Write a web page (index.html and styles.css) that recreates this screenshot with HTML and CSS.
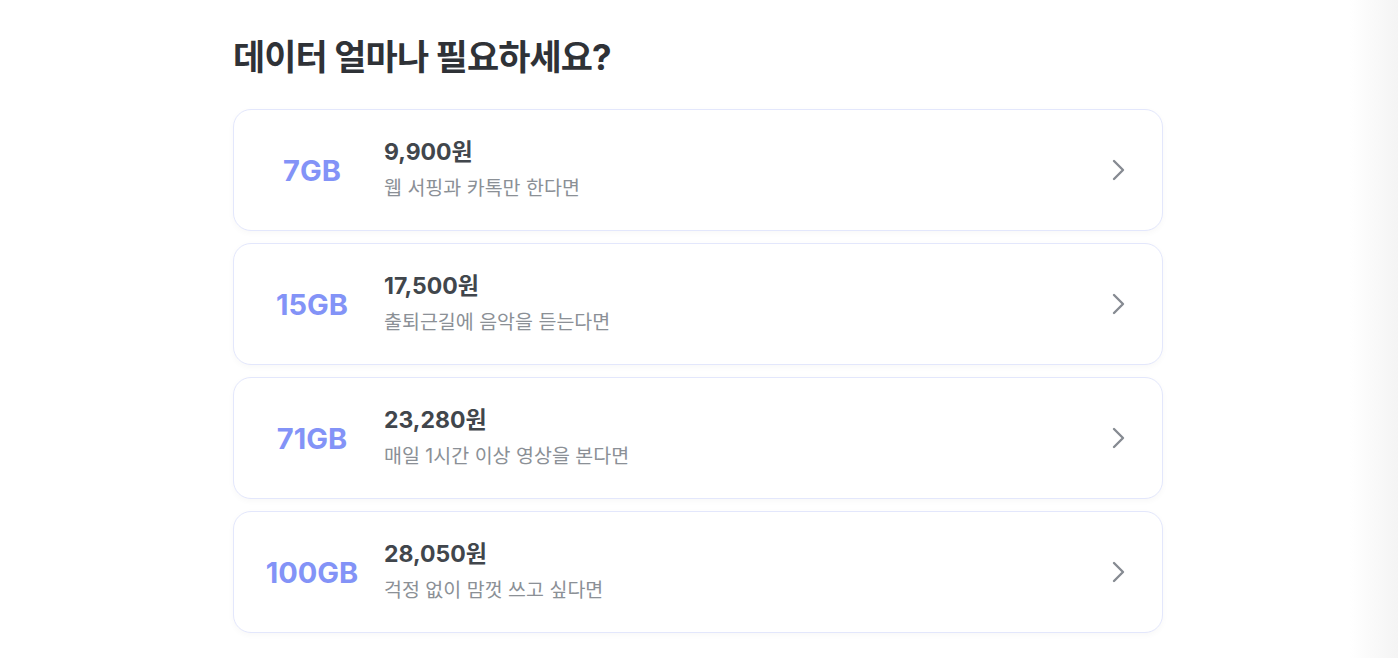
FILE: index.html
```html
<!DOCTYPE html>
<html lang="ko">
<head>
    <meta charset="UTF-8">
    <meta name="viewport" content="width=device-width, initial-scale=1.0">
    <title>요금제 선택</title>
    <link rel="stylesheet" href="styles.css">
</head>
<body>
    <main class="content">
        <h1 class="page-title">데이터 얼마나 필요하세요?</h1>

        <ul class="plan-list">
            <li class="plan-card">
                <div class="plan-data">7GB</div>
                <div class="plan-info">
                    <div class="plan-price">9,900원</div>
                    <div class="plan-desc">웹 서핑과 카톡만 한다면</div>
                </div>
                <svg class="plan-arrow" viewBox="0 0 14 22" width="14" height="22"><path d="M2 2l9 9-9 9" /></svg>
            </li>
            <li class="plan-card">
                <div class="plan-data">15GB</div>
                <div class="plan-info">
                    <div class="plan-price">17,500원</div>
                    <div class="plan-desc">출퇴근길에 음악을 듣는다면</div>
                </div>
                <svg class="plan-arrow" viewBox="0 0 14 22" width="14" height="22"><path d="M2 2l9 9-9 9" /></svg>
            </li>
            <li class="plan-card">
                <div class="plan-data">71GB</div>
                <div class="plan-info">
                    <div class="plan-price">23,280원</div>
                    <div class="plan-desc">매일 1시간 이상 영상을 본다면</div>
                </div>
                <svg class="plan-arrow" viewBox="0 0 14 22" width="14" height="22"><path d="M2 2l9 9-9 9" /></svg>
            </li>
            <li class="plan-card">
                <div class="plan-data">100GB</div>
                <div class="plan-info">
                    <div class="plan-price">28,050원</div>
                    <div class="plan-desc">걱정 없이 맘껏 쓰고 싶다면</div>
                </div>
                <svg class="plan-arrow" viewBox="0 0 14 22" width="14" height="22"><path d="M2 2l9 9-9 9" /></svg>
            </li>
        </ul>
    </main>
</body>
</html>
```

FILE: styles.css
```css
:root {
    --accent: #8393f7;
    --text: #31353a;
    --muted: #8b9096;
}

* {
    margin: 0;
    padding: 0;
    box-sizing: border-box;
}

body {
    font-family: Inter, "Noto Sans CJK KR", sans-serif;
    background: linear-gradient(to right, #fff calc(100% - 48px), #f4f4f4);
    min-height: 100vh;
    padding-right: 2px;
    color: var(--text);
}

.content {
    width: 930px;
    margin: 0 auto;
    padding-top: 34px;
}

.page-title {
    font-size: 35px;
    font-weight: 700;
    line-height: 46px;
    letter-spacing: -0.9px;
    color: #2f3237;
    margin-bottom: 29px;
}

.plan-list {
    list-style: none;
    display: flex;
    flex-direction: column;
    gap: 12px;
}

.plan-card {
    height: 122px;
    display: flex;
    align-items: center;
    padding: 0 36px 0 18px;
    background: #fff;
    border: 1px solid #e3e7fc;
    border-radius: 18px;
    box-shadow: 0 2px 6px rgba(0, 0, 0, 0.03);
    cursor: pointer;
}

.plan-data {
    width: 120px;
    margin-right: 12px;
    text-align: center;
    font-size: 29px;
    font-weight: 700;
    color: var(--accent);
}

.plan-info {
    flex: 1;
    display: flex;
    flex-direction: column;
    gap: 8px;
    margin-top: -2px;
}

.plan-price {
    font-size: 23px;
    font-weight: 700;
    color: #41464c;
    line-height: 30px;
}

.plan-desc {
    font-size: 19.5px;
    color: var(--muted);
    line-height: 26px;
}

.plan-arrow {
    fill: none;
    stroke: #868b92;
    stroke-width: 2.4;
    stroke-linecap: round;
    stroke-linejoin: round;
}
```
